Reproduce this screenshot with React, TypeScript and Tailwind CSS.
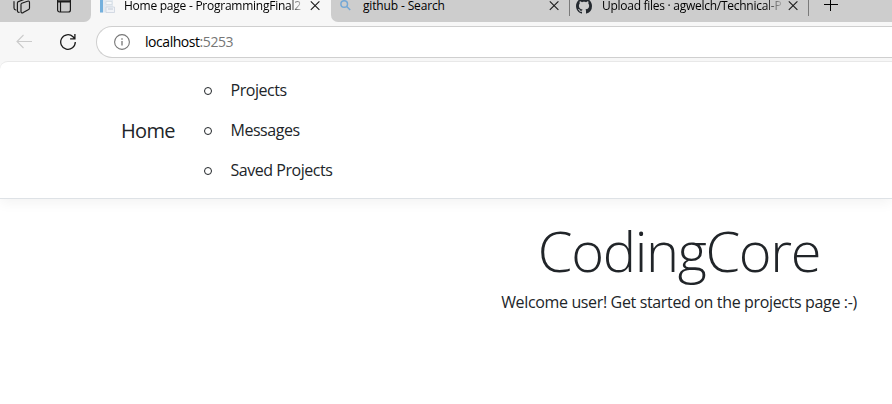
import React from "react";
import { BsGithub } from "react-icons/bs";

function Close() {
  return (
    <svg className="h-[11px] w-[10px] shrink-0" viewBox="0 0 10 11" fill="none" stroke="#1b1b1b" strokeWidth="1.1">
      <path d="M.8 1.300l8.600 8.600M9.400 1.300l-8.600 8.600" />
    </svg>
  );
}

function TabStrip() {
  return (
    <div className="flex h-[22px] bg-[#f7f7f7] text-[12px] text-black">
      <div className="h-full w-[91px] shrink-0 rounded-br-[7px] bg-[#cdcdcd]">
        <div className="flex h-[11px] items-center">
          <svg className="ml-[13px] h-[18px] w-[18px] shrink-0" viewBox="0 0 18 18" fill="none" stroke="#1b1b1b" strokeWidth="1.15" strokeLinejoin="round" strokeLinecap="round">
            <path d="M8.800 6.200l5.700-2q2-.6 2 1.200v5.600q0 1.300-1.300 1.800l-5 2.800q-2.200.9-2.200-1.200V7.500q0-1 .8-1.300z" />
            <path d="M6.300 15.300q-1.900.2-1.900-1.700V6q0-1 1-1.400L11 2.500M2.900 13Q1 12.800 1 11V4.500" />
          </svg>
          <svg className="ml-[26px] h-[15px] w-[14px] shrink-0" viewBox="0 0 14 15" fill="none" stroke="#1b1b1b" strokeWidth="1.2">
            <rect x=".6" y=".6" width="12.800" height="13.400" rx="2" />
            <path d="M1 3.400h12" strokeWidth="2.200" />
            <path d="M3.500 4v10" />
          </svg>
        </div>
      </div>
      <div className="flex h-[11px] w-[240px] shrink-0 items-center">
        <svg className="ml-[8px] h-[16px] w-[16px] shrink-0" viewBox="0 0 16 16">
          <path d="M1 0h13v14.500H1z" fill="#e3e9f0" />
          <path d="M1 0h3v14.500H1z" fill="#74b0dd" />
          <path d="M7 3.500h6v3H7z" fill="#f6f8fa" stroke="#cfd8e0" strokeWidth=".7" />
          <path d="M7 9h8.500v5.500H7z" fill="#f1f3f7" stroke="#cbd3de" strokeWidth=".8" />
          <path d="M9 11h5" stroke="#c3ccd8" />
        </svg>
        <span className="ml-[9px] w-[184px] whitespace-nowrap bg-gradient-to-r from-black from-[90%] to-transparent to-[98%] bg-clip-text leading-[16px] tracking-[-0.25px] text-transparent">
          Home page - ProgrammingFinal2
        </span>
        <span className="ml-[2px] flex"><Close /></span>
      </div>
      <div className="h-full min-w-0 flex-1 rounded-bl-[7px] bg-[#cdcdcd]">
        <div className="flex h-[11px] items-center">
          <svg className="ml-[9px] h-[11px] w-[11px] shrink-0" viewBox="0 0 11 11" fill="none" stroke="#75a8d5" strokeWidth="1.500">
            <circle cx="4.200" cy="4" r="3.300" />
            <path d="M6.700 6.500l3.500 3.500" />
          </svg>
          <span className="ml-[12px] w-[186px] whitespace-nowrap leading-[16px] tracking-[-0.15px]">github - Search</span>
          <Close />
          <span className="ml-[10px] h-[20px] w-px bg-[#7a7a7a]" />
          <BsGithub className="ml-[6px] h-[16px] w-[16px] shrink-0 text-[#24292f]" />
          <span className="ml-[10px] w-[181px] whitespace-nowrap bg-gradient-to-r from-black from-[90%] to-transparent to-[101%] bg-clip-text leading-[16px] tracking-[-0.27px] text-transparent">
            Upload files · agwelch/Technical-P
          </span>
          <span className="ml-[5px] flex"><Close /></span>
          <span className="ml-[10px] h-[20px] w-px bg-[#7a7a7a]" />
          <svg className="ml-[15px] h-[13px] w-[14px] shrink-0" viewBox="0 0 14 13" stroke="#000000" strokeWidth="1">
            <path d="M0 5.500h14M6.500 0v12" />
          </svg>
        </div>
      </div>
    </div>
  );
}

function Toolbar() {
  return (
    <div className="flex h-[39px] items-center bg-[#f7f7f7] pt-[1px]">
      <svg className="ml-[16px] h-[16px] w-[16px] shrink-0" viewBox="0 0 16 16" fill="none" stroke="#cbcbcb" strokeWidth="1.100">
        <path d="M16 7.500H1M7.500 1L1 7.500l6.500 6.500" />
      </svg>
      <svg className="ml-[28px] h-[16px] w-[16px] shrink-0" viewBox="0 0 16 16" fill="none" stroke="#1b1b1b" strokeWidth="1.300">
        <path d="M15.300 8A7.300 7.300 0 1 1 13 2.700l1.700 1.800M14.900 0v4.800h-4.800" />
      </svg>
      <div className="ml-[20px] flex h-[32px] min-w-0 flex-1 items-center rounded-l-full border border-r-0 border-[#cfcfcf] bg-white">
        <svg className="ml-[17px] h-[16px] w-[16px] shrink-0" viewBox="0 0 16 16" fill="none" stroke="#767676" strokeWidth="1.100">
          <circle cx="8" cy="8" r="7.400" />
          <path d="M8 7v4.500M8 4.300v1.400" strokeWidth="1.300" />
        </svg>
        <span className="ml-[15px] text-[14px] leading-[18px] tracking-[-0.45px] text-black">
          localhost<span className="text-[#767676]">:5253</span>
        </span>
      </div>
    </div>
  );
}

const links = ["Projects", "Messages", "Saved Projects"];

export default function App() {
  return (
    <div className="h-[404px] w-[892px] overflow-hidden bg-[#f7f7f7] font-['Open_Sans','Noto_Sans',sans-serif]">
      <TabStrip />
      <Toolbar />
      <div className="h-[343px] overflow-hidden rounded-tl-[8px] border-t border-[#e8e8e8] bg-white text-[#212529]">
        <header className="flex h-[137px] items-center border-b border-[#dee2e6] pl-[121px] pt-[2px] shadow-[0_4px_12px_rgba(0,0,0,0.05)]">
          <a className="w-[83px] text-[20px] leading-[30px] tracking-[-0.7px]">Home</a>
          <ul className="flex flex-col">
            {links.map((label) => (
              <li key={label} className="flex h-[40px] items-center">
                <span className="h-[8px] w-[8px] rounded-full border border-[#212529]" />
                <a className="mb-[2px] ml-[18.500px] text-[16px] leading-[24px] tracking-[-0.47px]">{label}</a>
              </li>
            ))}
          </ul>
        </header>
        <main className="ml-[466px] w-[426px] pt-[18px] text-center">
          <h1 className="whitespace-nowrap text-[56px] font-light leading-[67px] tracking-[-1.350px]">CodingCore</h1>
          <p className="mt-[6px] whitespace-nowrap text-[16px] leading-[24px] tracking-[-0.35px]">
            Welcome user! Get started on the projects page :-)
          </p>
        </main>
      </div>
    </div>
  );
}
